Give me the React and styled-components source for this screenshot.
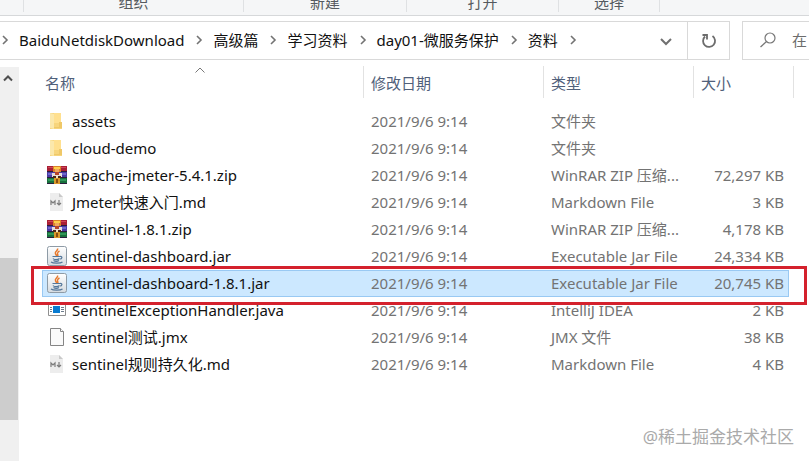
import { Fragment } from "react";
import styled, { createGlobalStyle } from "styled-components";

const groups = [
  { label: "组织", width: 220 },
  { label: "新建", width: 163 },
  { label: "打开", width: 152 },
  { label: "选择", width: 102 },
];

const crumbs = [
  "BaiduNetdiskDownload",
  "高级篇",
  "学习资料",
  "day01-微服务保护",
  "资料",
];

const files = [
  { icon: "folder", name: "assets", type: "文件夹", size: "" },
  { icon: "folder", name: "cloud-demo", type: "文件夹", size: "" },
  {
    icon: "rar",
    name: "apache-jmeter-5.4.1.zip",
    type: "WinRAR ZIP 压缩...",
    size: "72,297 KB",
  },
  {
    icon: "markdown",
    name: "Jmeter快速入门.md",
    type: "Markdown File",
    size: "3 KB",
  },
  {
    icon: "rar",
    name: "Sentinel-1.8.1.zip",
    type: "WinRAR ZIP 压缩...",
    size: "4,178 KB",
  },
  {
    icon: "jar",
    name: "sentinel-dashboard.jar",
    type: "Executable Jar File",
    size: "24,334 KB",
  },
  {
    icon: "jar",
    name: "sentinel-dashboard-1.8.1.jar",
    type: "Executable Jar File",
    size: "20,745 KB",
    selected: true,
  },
  {
    icon: "java",
    name: "SentinelExceptionHandler.java",
    type: "IntelliJ IDEA",
    size: "2 KB",
  },
  { icon: "blank", name: "sentinel测试.jmx", type: "JMX 文件", size: "38 KB" },
  {
    icon: "markdown",
    name: "sentinel规则持久化.md",
    type: "Markdown File",
    size: "4 KB",
  },
];

function FolderIcon() {
  return (
    <svg width="20" height="20" viewBox="0 0 20 20">
      <path d="M3 2h11v10h1v6H3z" fill="#f7d57c" />
      <path d="M3 2l4 1v15l-4-1z" fill="#fbe8ac" />
      <path d="M7 2h7v10H7z" fill="#ffe08f" />
      <path d="M12 11h3v6H7v-1h5z" fill="#efc868" />
    </svg>
  );
}

function RarIcon() {
  return (
    <svg width="20" height="20" viewBox="0 0 20 20">
      <path d="M0 1h20v6H0z" fill="#a81f35" />
      <path d="M1 2h18v1H1z" fill="#cf4558" />
      <path d="M0 7h20v6H0z" fill="#4a3ba5" />
      <path d="M1 8h18v2H1z" fill="#6f68cc" />
      <path d="M0 13h20v6H0z" fill="#176f3c" />
      <path d="M1 14h18v2H1z" fill="#2f9657" />
      <path d="M0 6h20v1H0zM0 12h20v1H0zM0 18h20v1H0z" fill="#2b1d3c" />
      <path d="M6 1h8v6H6z" fill="#d9822a" />
      <path d="M7 2h6v2H7z" fill="#ffcf4a" />
      <path d="M8 4h4v3H8z" fill="#f0a860" />
      <path d="M5 8h10v4H5z" fill="#e6dfdc" />
      <path d="M8 7h4v3H8z" fill="#b8452a" />
      <path d="M6 11h8v2H6z" fill="#4c2618" />
      <path d="M9 11h2v2H9z" fill="#f3e3c0" />
      <path d="M7 13h6v6H7z" fill="#d9982c" />
      <path d="M9 14h2v4H9z" fill="#8a4d12" />
    </svg>
  );
}

function MarkdownIcon() {
  return (
    <svg width="20" height="20" viewBox="0 0 20 20">
      <path d="M3 1h9l4 4v14H3z" fill="#ededed" />
      <path d="M12 1l4 4h-4z" fill="#c9c9c9" />
      <path
        d="M4 13V9l2 2 2-2v4M12 8v5M10 11l2 2 2-2"
        fill="none"
        stroke="#7c7c7c"
        strokeWidth="1.2"
      />
    </svg>
  );
}

function JarIcon() {
  return (
    <svg width="20" height="20" viewBox="0 0 20 20">
      <defs>
        <linearGradient id="tile" x2="0" y2="1">
          <stop offset="0" stopColor="#fff" />
          <stop offset="1" stopColor="#d5dbe0" />
        </linearGradient>
      </defs>
      <rect
        x="0.5"
        y="0.5"
        width="19"
        height="19"
        rx="2"
        fill="url(#tile)"
        stroke="#8e9ba6"
      />
      <path
        d="M10.5 2.5c1 2-3 3-2 5 0 1 1 1 1 2.500M12.500 5c-3 1.500-2 2.500-1.500 5"
        fill="none"
        stroke="#e8792c"
        strokeWidth="1.5"
      />
      <path
        d="M5.500 10.500h7.500M6 12.500c1 1.500 5 1.500 6.500 0M13 10.500c3-.5 2 2.500 0 2.500M6.500 14.500c1.500 1 4 1 5.500 0M4 16c2 1.500 9.500 1.500 11.500 0"
        fill="none"
        stroke="#54779a"
        strokeWidth="1.2"
      />
    </svg>
  );
}

function JavaFileIcon() {
  return (
    <svg width="20" height="20" viewBox="0 0 20 20">
      <path d="M1.5 3.5h17v12h-17z" fill="#fff" stroke="#909090" />
      <path d="M2 4h16v1H2z" fill="#b8b8b8" />
      <path d="M6 6h7v7H6z" fill="#087bd1" />
      <path
        d="M3 7.5h2M3 9.5h2M3 11.5h2M14 7.5h3M14 9.5h3M14 11.5h3"
        stroke="#6c7c8b"
      />
    </svg>
  );
}

function BlankIcon() {
  return (
    <svg width="20" height="20" viewBox="0 0 20 20">
      <path d="M3.5 1.5h10l3 3v14h-13z" fill="#fafafa" stroke="#858585" />
      <path d="M13.5 1.5v3h3" fill="#fff" stroke="#858585" />
    </svg>
  );
}

const icons = {
  folder: FolderIcon,
  rar: RarIcon,
  markdown: MarkdownIcon,
  jar: JarIcon,
  java: JavaFileIcon,
  blank: BlankIcon,
};

function CrumbArrow() {
  return (
    <svg width="8" height="10" viewBox="0 0 8 10">
      <path d="M2 1l4 4-4 4" fill="none" stroke="#737373" strokeWidth="1.6" />
    </svg>
  );
}

export default function App() {
  return (
    <>
      <GlobalStyle />
      <StyledWindow>
        <StyledRibbon>
          {groups.map(({ label, width }) => (
            <StyledGroup key={label} $width={width}>
              {label}
            </StyledGroup>
          ))}
        </StyledRibbon>

        <StyledNavigation>
          <StyledAddress>
            <StyledCrumbs aria-label="路径">
              <CrumbArrow />
              {crumbs.map((crumb) => (
                <Fragment key={crumb}>
                  <StyledCrumb href="#">{crumb}</StyledCrumb>
                  <CrumbArrow />
                </Fragment>
              ))}
            </StyledCrumbs>
            <StyledIconButton type="button" aria-label="展开">
              <svg width="14" height="10" viewBox="0 0 14 10">
                <path
                  d="M2 3l5 5 5-5"
                  fill="none"
                  stroke="#707070"
                  strokeWidth="2"
                />
              </svg>
            </StyledIconButton>
            <StyledIconButton type="button" aria-label="刷新" $divided>
              <svg width="16" height="18" viewBox="0 0 16 18">
                <path
                  d="M4 4.5a6 6 0 1 0 7.5-.5"
                  fill="none"
                  stroke="#6c6c6c"
                  strokeWidth="1.8"
                />
                <path
                  d="M1.5 3h4.500v4.500"
                  fill="none"
                  stroke="#6c6c6c"
                  strokeWidth="1.8"
                />
              </svg>
            </StyledIconButton>
          </StyledAddress>
          <StyledSearch>
            <svg width="18" height="18" viewBox="0 0 18 18">
              <circle
                cx="11"
                cy="7"
                r="5"
                fill="none"
                stroke="#777"
                strokeWidth="1.2"
              />
              <path d="M7.5 10.500L1.500 16" stroke="#777" strokeWidth="1.3" />
            </svg>
            <StyledInput type="text" aria-label="搜索" placeholder="在" />
          </StyledSearch>
        </StyledNavigation>

        <StyledBody>
          <StyledScrollbar>
            <StyledScrollButton type="button" aria-label="向上滚动">
              <svg width="12" height="8" viewBox="0 0 12 8">
                <path
                  d="M2 6.5l4-4 4 4"
                  fill="none"
                  stroke="#505050"
                  strokeWidth="2"
                />
              </svg>
            </StyledScrollButton>
            <StyledThumb />
          </StyledScrollbar>
          <StyledContent>
            <StyledTable>
              <colgroup>
                <col />
                <StyledCol $width={180} />
                <StyledCol $width={150} />
                <StyledCol $width={95} />
                <StyledCol $width={5} />
              </colgroup>
              <thead>
                <tr>
                  <StyledHeader aria-sort="ascending">
                    <StyledHeading $indent={3}>
                      名称
                      <StyledSort width="12" height="8" viewBox="0 0 12 8">
                        <path
                          d="M1.5 6.500l4.500-4.500 4.500 4.500"
                          fill="none"
                          stroke="#777"
                        />
                      </StyledSort>
                    </StyledHeading>
                  </StyledHeader>
                  <StyledHeader>
                    <StyledHeading>修改日期</StyledHeading>
                  </StyledHeader>
                  <StyledHeader>
                    <StyledHeading>类型</StyledHeading>
                  </StyledHeader>
                  <StyledHeader colSpan={2}>
                    <StyledHeading>大小</StyledHeading>
                  </StyledHeader>
                </tr>
              </thead>
              <tbody>
                {files.map(({ icon, name, type, size, selected }) => {
                  const Icon = icons[icon];
                  return (
                    <StyledRow key={name} $selected={selected}>
                      <StyledCell $first>
                        <StyledName>
                          <Icon />
                          {name}
                        </StyledName>
                        {selected && <StyledOutline />}
                      </StyledCell>
                      <StyledCell>2021/9/6 9:14</StyledCell>
                      <StyledCell>{type}</StyledCell>
                      <StyledCell $last>{size}</StyledCell>
                      <td />
                    </StyledRow>
                  );
                })}
              </tbody>
            </StyledTable>
            <StyledWatermark>@稀土掘金技术社区</StyledWatermark>
          </StyledContent>
        </StyledBody>
      </StyledWindow>
    </>
  );
}

const GlobalStyle = createGlobalStyle`
  * {
    box-sizing: border-box;
  }

  body {
    margin: 0;
    background: #fff;
    font-family: "Noto Sans", "Noto Sans CJK SC", sans-serif;
    font-size: 15px;
    line-height: 20px;
  }

  svg {
    display: block;
    flex-shrink: 0;
  }

  button,
  input {
    font: inherit;
  }
`;

const StyledWindow = styled.main`
  display: flex;
  flex-direction: column;
  min-height: 100vh;
  overflow: hidden;
`;

const StyledRibbon = styled.div`
  display: flex;
  height: 16px;
  padding: 0 0 3px 23px;
  background: #f5f6f7;
  border-bottom: 1px solid #d6d8da;
`;

const StyledGroup = styled.div`
  display: flex;
  align-items: flex-end;
  justify-content: center;
  width: ${({ $width }) => $width}px;
  color: #555a60;
  border-left: 1px solid #dfe1e3;

  &:last-child {
    border-right: 1px solid #dfe1e3;
  }
`;

const StyledNavigation = styled.div`
  display: flex;
  gap: 12px;
  padding-top: 5px;
`;

const StyledAddress = styled.div`
  display: flex;
  flex: 1;
  height: 39px;
  border: 1px solid #d9d9d9;
  border-left: none;
`;

const StyledCrumbs = styled.nav`
  display: flex;
  flex: 1;
  align-items: center;
  gap: 10px;
  padding: 0 0 2px 1px;
  white-space: nowrap;
`;

const StyledCrumb = styled.a`
  padding-right: 1px;
  color: #111;
  text-decoration: none;
`;

const StyledIconButton = styled.button`
  display: flex;
  align-items: center;
  justify-content: center;
  width: 42px;
  padding: 0;
  background: none;
  border: none;
  border-left: ${({ $divided }) => ($divided ? "1px solid #d9d9d9" : "none")};
`;

const StyledSearch = styled.label`
  display: flex;
  align-items: center;
  gap: 15px;
  width: 67px;
  padding: 0 0 2px 16px;
  border: 1px solid #d9d9d9;
  border-right: none;
`;

const StyledInput = styled.input`
  flex: 1;
  min-width: 0;
  padding: 0;
  border: none;
  outline: none;

  &::placeholder {
    color: #6d6d6d;
  }
`;

const StyledBody = styled.div`
  display: flex;
  flex: 1;
`;

const StyledScrollbar = styled.div`
  display: flex;
  flex-direction: column;
  width: 19px;
  margin-top: 7px;
  background: #f0f0f0;
`;

const StyledScrollButton = styled.button`
  display: flex;
  align-items: center;
  height: 21px;
  padding: 0 0 0 2px;
  background: none;
  border: none;
`;

const StyledThumb = styled.div`
  width: 18px;
  height: 162px;
  margin-top: 170px;
  background: #cdcdcd;
`;

const StyledContent = styled.section`
  display: flex;
  flex: 1;
  flex-direction: column;
  justify-content: space-between;
  padding: 0 15px 14px 23px;
`;

const StyledTable = styled.table`
  width: 100%;
  table-layout: fixed;
  border-collapse: separate;
  border-spacing: 0;
`;

const StyledCol = styled.col`
  width: ${({ $width }) => $width}px;
`;

const StyledHeader = styled.th`
  padding: 6px 0 10px;
  font-weight: 400;
`;

const StyledHeading = styled.div`
  position: relative;
  display: flex;
  align-items: center;
  height: 32px;
  padding: 2px 0 0 ${({ $indent }) => $indent ?? 7}px;
  color: #50607a;
  border-right: 1px solid #e2e2e2;
`;

const StyledSort = styled.svg`
  position: absolute;
  top: 0;
  left: calc(50% - 8px);
`;

const StyledRow = styled.tr`
  --line: ${({ $selected }) => ($selected ? "#99c9f3" : "transparent")};
  --fill: ${({ $selected }) => ($selected ? "#cce8ff" : "transparent")};
`;

const StyledCell = styled.td`
  position: relative;
  height: 27px;
  padding: ${({ $first, $last }) =>
    $first ? "0 0 2px 4px" : $last ? "0 4px 2px 0" : "0 0 2px 7px"};
  color: ${({ $first }) => ($first ? "#111" : "#737373")};
  text-align: ${({ $last }) => ($last ? "right" : "left")};
  white-space: nowrap;
  background: var(--fill);
  border: 0 solid var(--line);
  border-width: ${({ $first, $last }) =>
    $first ? "1px 0 1px 1px" : $last ? "1px 1px 1px 0" : "1px 0"};
`;

const StyledName = styled.div`
  display: flex;
  align-items: center;
  gap: 5px;
`;

/* red frame laid over the selected row */
const StyledOutline = styled.div`
  position: absolute;
  z-index: 1;
  top: -5px;
  left: -12px;
  width: calc(100vw - 33px);
  height: 39px;
  border: 3px solid #d4212d;
  pointer-events: none;
`;

const StyledWatermark = styled.p`
  margin: 0;
  color: #aaa;
  font-size: 17px;
  text-align: right;
`;
